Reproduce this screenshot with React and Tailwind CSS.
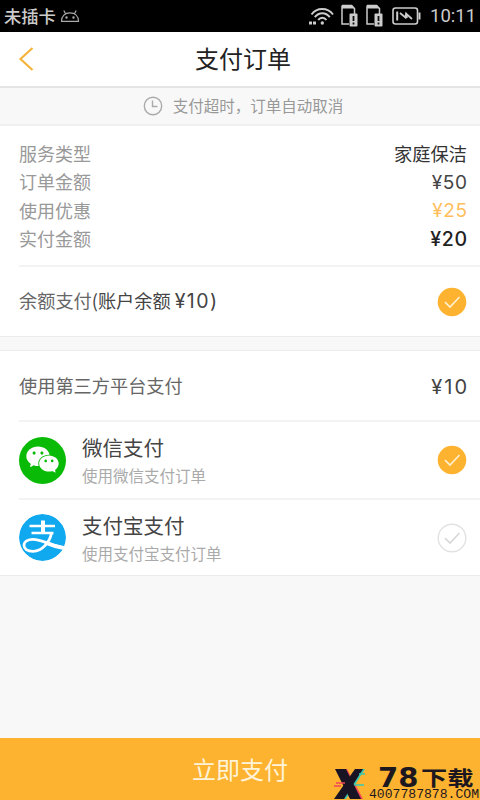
import { AiFillWechat } from "react-icons/ai"

const orderRows = [
  { label: "服务类型", value: "家庭保洁", style: "text-[#333] font-normal text-[18.3px]" },
  { label: "订单金额", value: "¥50", style: "text-[#444] text-[19px] tracking-[0.6px] -mr-[0.6px] pt-[2px] font-[Inter,sans-serif]" },
  { label: "使用优惠", value: "¥25", style: "text-[#ffbe5c] text-[19px] tracking-[0.6px] -mr-[0.6px] pt-[2px] font-[Inter,sans-serif]" },
  { label: "实付金额", value: "¥20", style: "text-[#222] font-medium text-[19.5px] tracking-[0.6px] -mr-[0.6px] pt-[2px] font-[Inter,sans-serif]" },
]

const CheckMark = ({ checked }) => (
  <svg className="h-[30px] w-[30px] shrink-0" viewBox="0 0 30 30" fill="none">
    <circle
      cx="15"
      cy="15"
      r={checked ? 14.3 : 13.8}
      fill={checked ? "#fdb32f" : "#fff"}
      stroke={checked ? "none" : "#e2e2e2"}
      strokeWidth="1.4"
    />
    <path d="M8 15.2l5 4.8 9.5-10" stroke={checked ? "#fff0d0" : "#d8d8d8"} strokeWidth="1.6" />
  </svg>
)

const AlipayIcon = () => (
  <svg className="h-[47px] w-[47px] shrink-0 rounded-full" viewBox="0 0 47 47" fill="none">
    <circle cx="23.5" cy="23.5" r="23.5" fill="#10a8ee" />
    <path d="M10.500 12h25.500M12.500 19h22" stroke="#fff" strokeWidth="2.600" />
    <path d="M24 6.500V19" stroke="#fff" strokeWidth="4" />
    <path
      d="M32.500 19C31 27 24 37.300 14 37.300C8 37.300 5 34.500 5 31.300C5 27.500 9 25.300 14 25.300C22 25.300 32 31 47 34.500"
      stroke="#fff"
      strokeWidth="2.800"
    />
    <path d="M26 28.500C33 31.500 40 33.500 47 34.500" stroke="#fff" strokeWidth="4" />
  </svg>
)

const SimIcon = () => (
  <svg className="h-[24px] w-[19px]" viewBox="0 0 19 24" fill="none">
    <path d="M2 1.5h9.5l3 3V10M2 1.5V20h7" stroke="#ccc" strokeWidth="1.5" />
    <path d="M2 1h10l2.5 3.5H2z" fill="#ccc" />
    <rect x="9.5" y="9.5" width="8" height="13" rx="1" fill="#ccc" />
    <path d="M13.5 12v5M13.5 18.6v2" stroke="#111" strokeWidth="1.8" />
  </svg>
)

const StatusBar = () => (
  <div className="flex h-8 items-center bg-black pl-1 pr-1 text-[#ccc]">
    <span className="text-[17.3px] leading-8 font-medium">未插卡</span>
    <svg className="ml-1 h-[14px] w-[20px]" viewBox="0 0 20 14" fill="none" stroke="#aaa" strokeWidth="1.2">
      <path d="M1.5 12.3C1.5 7 5 3.8 10 3.8s8.500 3.200 8.500 8.500zM5.500 4.800L3.800 1.500M14.500 4.800l1.700-3.300" />
      <circle cx="6.500" cy="8.500" r=".6" fill="#aaa" />
      <circle cx="13.500" cy="8.500" r=".6" fill="#aaa" />
    </svg>
    <div className="ml-auto flex items-center">
      <svg className="h-[20px] w-[26px]" viewBox="0 0 26 20" fill="none" stroke="#ccc" strokeWidth="2">
        <path d="M3.500 8.500C9 1.300 19.500 1.300 25 8.500M6.800 11.200c4-5.200 11-5.200 15 0M10.200 14c2.200-3 6-3 8.200 0" />
        <circle cx="14.300" cy="17" r="1.700" fill="#ccc" stroke="none" />
        <path d="M1 17h3M5 17h3" strokeWidth="3.200" />
      </svg>
      <div className="ml-[6px] flex gap-[6px]">
        <SimIcon />
        <SimIcon />
      </div>
      <svg className="ml-[8px] h-[18px] w-[29px]" viewBox="0 0 29 18" fill="none" stroke="#ccc" strokeWidth="1.600">
        <rect x="1" y="1" width="24.500" height="16" rx="2.500" />
        <path d="M27.500 5.500v7" strokeWidth="2" />
        <path d="M5.200 4.500v9" strokeWidth="2" />
        <path d="M8 6l5.500 4.500L14 6.500l6 5.500M14 6l1 5" strokeWidth="1.700" />
      </svg>
      <span className="ml-[9px] w-[46px] whitespace-nowrap font-[Roboto,sans-serif] text-[18.500px] leading-8">10:11</span>
    </div>
  </div>
)

const PayMethod = ({ icon, title, desc, checked }) => (
  <div className="flex items-center pr-[13px]">
    {icon}
    <div className="ml-4 flex-1 pt-[2px]">
      <p className="text-[20.500px] leading-7 text-[#444]">{title}</p>
      <p className="text-[15.500px] leading-7 text-[#aaa]">{desc}</p>
    </div>
    <CheckMark checked={checked} />
  </div>
)

const Watermark = () => (
  <div className="absolute right-0 bottom-0 flex h-[33px] w-[147px] text-[#1d1820]">
    <svg className="mt-[1px] h-[31px] w-[34px] shrink-0" viewBox="0 0 34 31" fill="none">
      <path d="M4 1h10l16 30H19z" fill="#f0455a" />
      <path d="M23 1h9L13 31H3z" fill="#38c8b0" />
      <path d="M2 1h11l15 30H17z" fill="#181424" />
      <path d="M22 1h8L11 31H1z" fill="#181424" />
      <path d="M3 15h9M1 18h7" stroke="#f0455a" strokeWidth="1.500" />
      <path d="M22 17h9M26 6h6" stroke="#38c8b0" strokeWidth="1.500" />
    </svg>
    <div className="ml-[2px] flex flex-col">
      <div className="flex h-[22px] whitespace-nowrap pl-[9px]">
        <span className="w-[43px] origin-left scale-x-[1.120] font-['DejaVu_Sans',sans-serif] text-[26px] leading-[22px] font-bold">78</span>
        <span className="origin-left scale-x-[1.280] text-[20.500px] leading-[20px] font-bold">下载</span>
      </div>
      <p className="w-[111px] whitespace-nowrap pt-px font-['Liberation_Mono',monospace] text-[13.100px] leading-[10px]">
        4007787878.COM
      </p>
    </div>
  </div>
)

const App = () => {
  return (
    <div className="relative flex h-[800px] w-[480px] flex-col overflow-hidden bg-[#f8f8f8] font-['Noto_Sans_CJK_SC',sans-serif]">
      <StatusBar />

      {/* Title bar */}
      <header className="grid h-[56px] grid-cols-[60px_1fr_54px] items-center border-b-2 border-[#e4e4e4] bg-white">
        <svg className="ml-[18px] h-[26px] w-[16px]" viewBox="0 0 16 26" fill="none">
          <path d="M14.500 2L2.500 13l12 11" stroke="#f6b33c" strokeWidth="2.200" />
        </svg>
        <h1 className="pb-[2px] text-center text-[24px] leading-8 text-[#222]">支付订单</h1>
      </header>

      {/* Timeout notice */}
      <div className="flex h-[38px] items-center justify-center border-b-2 border-[#f0f0f0] pl-[6px] text-[#999]">
        <svg className="mr-[10px] h-5 w-5" viewBox="0 0 20 20" fill="none" stroke="#aaa" strokeWidth="1.400">
          <circle cx="10" cy="10" r="8.700" />
          <path d="M9.500 4.500v6h5" />
        </svg>
        <span className="text-[15.500px]">支付超时，订单自动取消</span>
      </div>

      {/* Order summary */}
      <section className="border-b border-[#ebebeb] bg-white pl-[19px]">
        <div className="border-b-2 border-[#f3f3f3] pt-[13px] pb-[12px] pr-[13px]">
          {orderRows.map((row) => (
            <div key={row.label} className="flex h-[28.500px] items-center justify-between">
              <span className="text-[18px] text-[#999]">{row.label}</span>
              <span className={row.style}>{row.value}</span>
            </div>
          ))}
        </div>
        <div className="flex h-[69px] items-center justify-between pr-[13px]">
          <p className="pt-px text-[18.200px] text-[#666]">
            余额支付
            <span className="text-[#444]">
              (账户余额 <span className="font-[Inter,sans-serif] text-[19.500px] tracking-[1.400px]">¥10)</span>
            </span>
          </p>
          <CheckMark checked />
        </div>
      </section>

      {/* Third-party payment */}
      <section className="mt-[13px] border-y border-[#ebebeb] bg-white pl-[19px]">
        <div className="flex h-[71px] items-center justify-between border-b-2 border-[#f3f3f3] pr-[13px] text-[#666]">
          <span className="text-[18.200px]">使用第三方平台支付</span>
          <span className="-mr-[2px] pt-[2px] font-[Inter,sans-serif] text-[20px] tracking-[2px] text-[#444]">¥10</span>
        </div>
        <div className="flex h-[78px] flex-col justify-center border-b-2 border-[#f3f3f3]">
          <PayMethod
            icon={
              <span className="flex h-[47px] w-[47px] items-center justify-center rounded-full bg-[#09bb07] pb-[2px] text-white">
                <AiFillWechat size={37} />
              </span>
            }
            title="微信支付"
            desc="使用微信支付订单"
            checked
          />
        </div>
        <div className="flex h-[75px] flex-col justify-center">
          <PayMethod icon={<AlipayIcon />} title="支付宝支付" desc="使用支付宝支付订单" checked={false} />
        </div>
      </section>

      <button className="mt-auto h-[62px] bg-[#fdb32f] text-center text-[24px] text-[#fff3d9]">立即支付</button>
      <Watermark />
    </div>
  )
}

export default App
